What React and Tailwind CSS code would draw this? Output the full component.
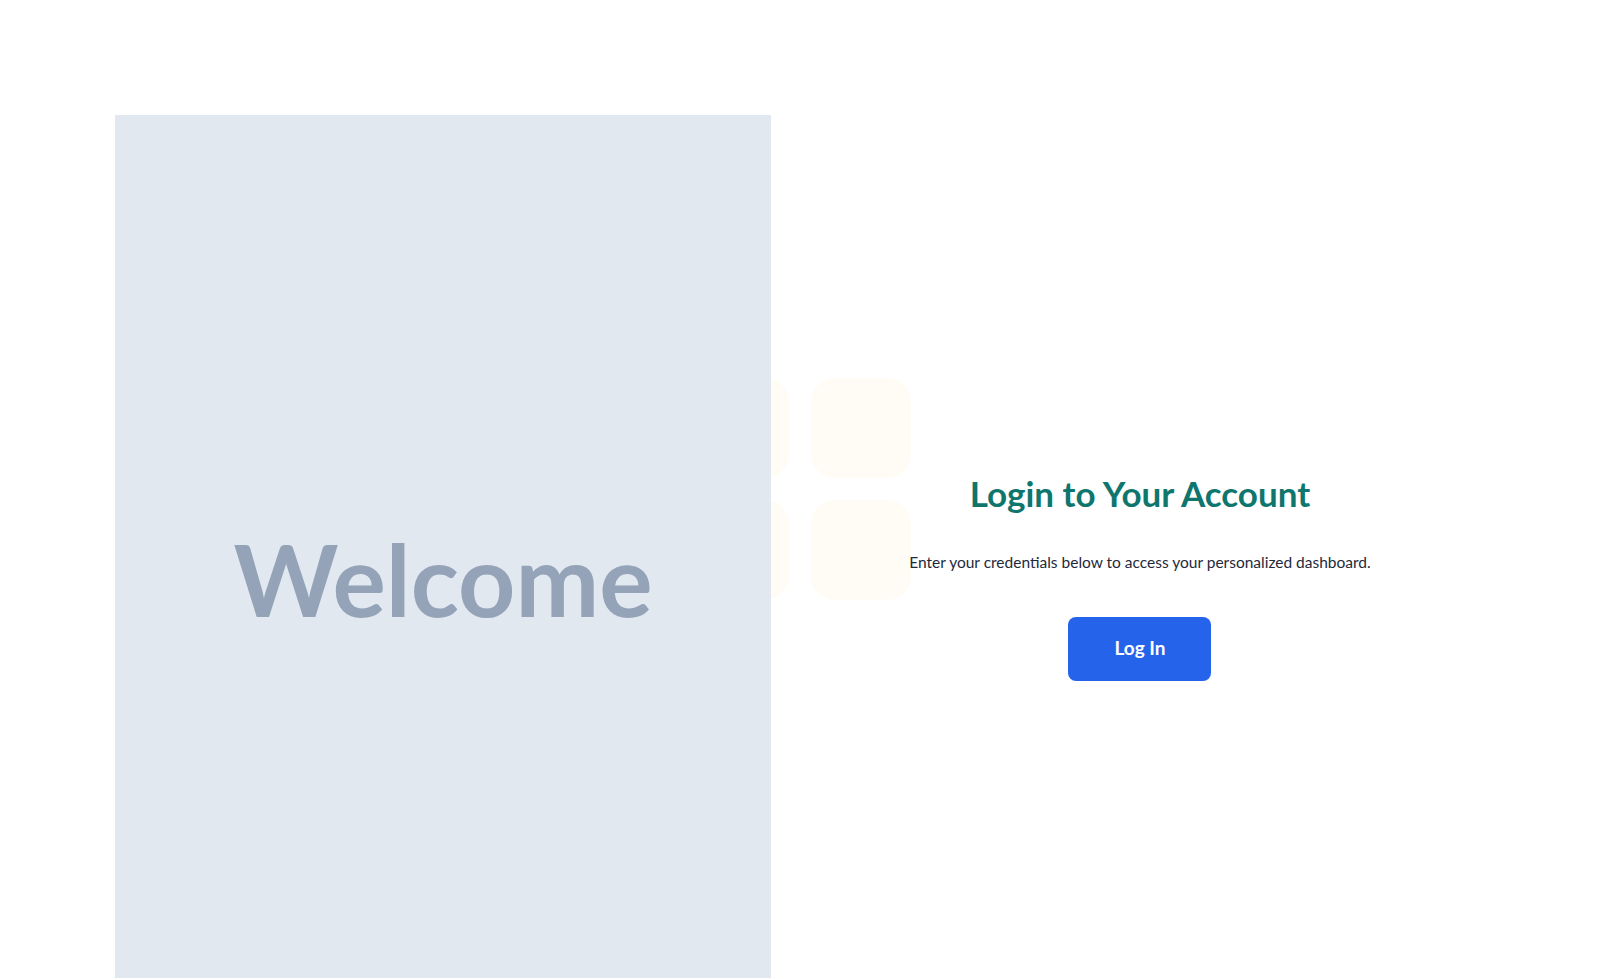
import React from 'react';

const Deco = () => (
  <div className="absolute left-[-82px] top-[263px] grid grid-cols-2 gap-[22px] z-0">
    <div className="w-[100px] h-[100px] rounded-3xl bg-[#fefcf5]" />
    <div className="w-[100px] h-[100px] rounded-3xl bg-[#fefcf5]" />
    <div className="w-[100px] h-[100px] rounded-3xl bg-[#fefcf5]" />
    <div className="w-[100px] h-[100px] rounded-3xl bg-[#fefcf5]" />
  </div>
);

export default function App() {
  return (
    <div className="w-full h-[978px] overflow-hidden bg-white pt-[115px] pl-[115px]">
      <div className="flex h-[926px]">
        {/* Left welcome panel */}
        <div className="relative z-10 w-[656px] h-full bg-[#e2e8f0] flex items-center justify-center">
          <h1 className="text-[100px] leading-none font-bold text-[#94a3b8] font-['Lato',sans-serif]">Welcome</h1>
        </div>

        {/* Right login column */}
        <div className="relative w-[738px] h-full flex items-center justify-center">
          <Deco />
          <div className="relative z-10 flex flex-col items-center text-center font-['Lato',sans-serif] -mt-[4px]">
            <h2 className="text-[35px] leading-tight font-bold text-[#0f766e]">Login to Your Account</h2>
            <p className="mt-[36px] text-[15.5px] text-[#1e293b]">
              Enter your credentials below to access your personalized dashboard.
            </p>
            <button className="mt-[42px] w-[143px] h-[64px] rounded-lg bg-[#2563eb] text-white text-[19px] font-bold">
              Log In
            </button>
          </div>
        </div>
      </div>
    </div>
  );
}
